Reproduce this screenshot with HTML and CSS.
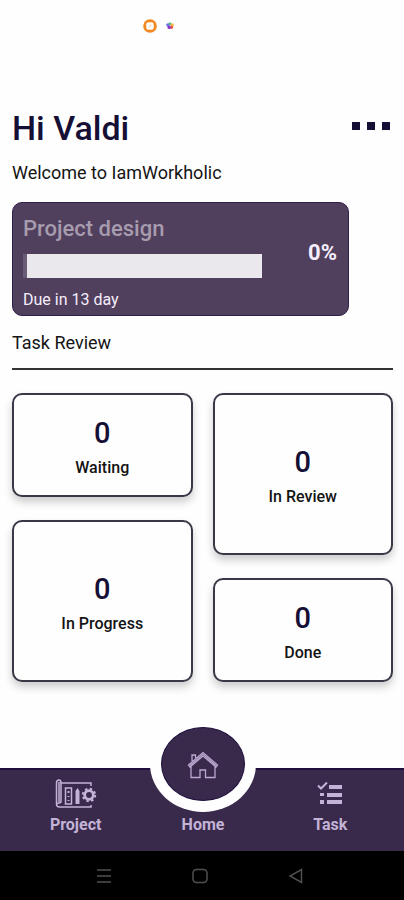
FILE: index.html
```html
<!DOCTYPE html>
<html lang="en">
<head>
<meta charset="utf-8">
<meta name="viewport" content="width=device-width, initial-scale=1">
<title>IamWorkholic</title>
<link rel="stylesheet" href="styles.css">
</head>
<body>
<div class="status">
  <svg width="14" height="14" viewBox="0 0 14 14" aria-hidden="true">
    <circle cx="7" cy="7" r="6.8" fill="#f5871f"/>
    <rect x="3.2" y="3.2" width="7.6" height="7.6" rx="2.2" fill="#fff"/>
    <path d="M6 8.500 8 5.500" stroke="#f9c79a" stroke-width="1"/>
  </svg>
  <svg width="10" height="10" viewBox="0 0 10 10" aria-hidden="true">
    <circle cx="3" cy="4" r="1.800" fill="#6c6be8"/>
    <circle cx="5" cy="2.800" r="1.500" fill="#58b98a"/>
    <circle cx="7.200" cy="4" r="1.700" fill="#f5b942"/>
    <circle cx="6.500" cy="6.300" r="1.700" fill="#ee5a50"/>
    <circle cx="4.200" cy="6.400" r="1.700" fill="#8a35c9"/>
  </svg>
</div>
<main class="content">
  <header class="top">
    <h1>Hi Valdi</h1>
    <button class="more" type="button" aria-label="More options"><span></span><span></span><span></span></button>
  </header>
  <p class="welcome">Welcome to IamWorkholic</p>
  <section class="project">
    <div class="project-info">
      <h2 id="project-name">Project design</h2>
      <progress value="0" max="100" aria-labelledby="project-name"></progress>
      <p class="due">Due in 13 day</p>
    </div>
    <strong class="percent">0%</strong>
  </section>
  <h3 class="review-title">Task Review</h3>
  <section class="board">
    <div class="column">
      <article class="card"><strong>0</strong><span>Waiting</span></article>
      <article class="card tall"><strong>0</strong><span>In Progress</span></article>
    </div>
    <div class="column">
      <article class="card tall"><strong>0</strong><span>In Review</span></article>
      <article class="card"><strong>0</strong><span>Done</span></article>
    </div>
  </section>
</main>
<nav class="tabs">
  <a href="#project">
    <svg width="42" height="30" viewBox="0 0 42 30" fill="none" stroke="#c3b3d6" stroke-width="1.5" aria-hidden="true">
      <path d="M6 4H36V7M36 26V28H4.500Q1.500 28 1.500 25V4Q1.500 1 4 1Q6 1 6 4V22Q6 24 4 24Q1.500 24 1.500 26M4 3V23"/>
      <rect x="10.500" y="9" width="6" height="16"/>
      <path d="M13.500 12V14M13.500 17V18M13.500 21V22" stroke-width="2"/>
      <path d="M20.500 25V12L22.500 9L24.500 12V25Z" fill="#c3b3d6" stroke="none"/>
      <circle cx="34" cy="16" r="4.300" stroke-width="2.800"/>
      <circle cx="34" cy="16" r="6.200" stroke-width="2" stroke-dasharray="2.435"/>
    </svg>
    <span>Project</span>
  </a>
  <a href="#home" aria-current="page">
    <span class="home-disc">
      <svg width="32" height="30" viewBox="0 0 32 30" fill="none" stroke="#bba9d0" stroke-width="1.300" aria-hidden="true">
        <path d="M1.500 16 16 3.500 30.500 16 29 18 16 7 3 18ZM5 12V6H8.500V9M4 17V28.500H13V21H18.500V28.500H28V17"/>
        <path d="M3 16.500 16 5.300 29 16.500"/>
      </svg>
    </span>
    <span>Home</span>
  </a>
  <a href="#task">
    <svg width="26" height="28" viewBox="0 0 26 28" fill="#c3b3d6" aria-hidden="true">
      <path d="M12 4H25V8H12ZM10 12H25V16H10ZM10 19H25V23H10ZM3 12H7V15H3ZM3 19H7V23H3Z"/>
      <path d="M1 4.500 4 7.500 10 1.500" fill="none" stroke="#c3b3d6" stroke-width="2"/>
    </svg>
    <span>Task</span>
  </a>
</nav>
<div class="system">
  <button type="button" aria-label="Recent apps"><svg width="16" height="16" viewBox="0 0 16 16"><path d="M1 2H15M1 8H15M1 14H15"/></svg></button>
  <button type="button" aria-label="Home screen"><svg width="16" height="16" viewBox="0 0 16 16"><rect x="1" y="1.500" width="14" height="13" rx="3.500"/></svg></button>
  <button type="button" aria-label="Back"><svg width="16" height="16" viewBox="0 0 16 16"><path d="M13.500 1.500V14.500L2 8Z"/></svg></button>
</div>
</body>
</html>
```
FILE: styles.css
```css
* { box-sizing: border-box; }

body {
  margin: 0;
  min-height: 100vh;
  display: flex;
  flex-direction: column;
  background: #fefefe;
  color: #141414;
  font-family: Roboto, sans-serif;
}

h1, h2, h3, p { margin: 0; }

button { border: 0; padding: 0; background: none; }

.status {
  display: flex;
  align-items: center;
  justify-content: center;
  gap: 8px;
  height: 52px;
  padding-right: 87px;
}

.content {
  flex: 1;
  padding: 56px 11px 48px 12px;
}

.top {
  display: flex;
  align-items: center;
  justify-content: space-between;
}

h1 {
  font-size: 34px;
  line-height: 40px;
  font-weight: 500;
  color: #160f35;
}

.more {
  display: flex;
  gap: 7px;
  padding: 8px 3px 12px;
}

.more span {
  width: 8px;
  height: 8px;
  background: #160f35;
}

.welcome {
  margin-top: 12px;
  font-size: 18px;
  line-height: 26px;
}

.project {
  display: flex;
  align-items: center;
  justify-content: space-between;
  width: 337px;
  max-width: 100%;
  margin-top: 16px;
  padding: 12px 11px 4px 10px;
  border: 1px solid #2f2048;
  border-radius: 10px;
  background: #503f5d;
  color: #f5eefb;
}

.project-info { width: 76%; }

h2 {
  font-size: 22px;
  line-height: 28px;
  font-weight: 500;
  color: #a79cae;
}

progress {
  display: block;
  appearance: none;
  width: 100%;
  height: 24px;
  margin: 11px 0;
  border: 0;
  border-left: 4px solid #6a5b77;
  background: #ebe8ed;
}

progress::-webkit-progress-bar { background: #ebe8ed; }

progress::-webkit-progress-value { background: #6a5b77; }

.due {
  font-size: 16px;
  line-height: 22px;
}

.percent {
  padding-bottom: 20px;
  font-size: 22px;
  line-height: 28px;
  font-weight: 700;
}

.review-title {
  margin-top: 14px;
  padding-bottom: 12px;
  border-bottom: 2px solid #333;
  font-size: 18px;
  line-height: 26px;
  font-weight: 400;
}

.board {
  display: grid;
  grid-template-columns: 1fr 1fr;
  gap: 20px;
  margin-top: 23px;
}

.column {
  display: flex;
  flex-direction: column;
  gap: 23px;
}

.card {
  display: flex;
  flex-direction: column;
  align-items: center;
  gap: 9px;
  padding: 22px 8px 17px;
  border: 2px solid #3a3846;
  border-radius: 10px;
  background: #fefefe;
  box-shadow: 0 5px 9px rgba(0, 0, 0, 0.2);
}

.card.tall { padding: 51px 8px 46px; }

.card strong {
  font-size: 29px;
  line-height: 32px;
  font-weight: 500;
  color: #160f35;
}

.card span {
  font-size: 16px;
  line-height: 20px;
  font-weight: 500;
}

.tabs {
  display: grid;
  grid-template-columns: 1fr 1fr 1fr;
  height: 83px;
  padding: 0 10px 0 12px;
  border-top: 2px solid #1e0f3d;
  background: #39294b;
}

.tabs a {
  position: relative;
  display: flex;
  flex-direction: column;
  align-items: center;
  justify-content: flex-end;
  gap: 6px;
  padding-bottom: 16px;
  color: #c3b3d6;
  font-size: 16px;
  line-height: 20px;
  font-weight: 700;
  text-decoration: none;
}

.home-disc {
  position: absolute;
  top: -43px;
  left: 50%;
  display: flex;
  align-items: center;
  justify-content: center;
  width: 84px;
  height: 74px;
  margin-left: -42px;
  border: 1px solid #1e0f3d;
  border-radius: 50%;
  background: #39294b;
  box-shadow: 0 0 0 11px #fefefe;
}

.system {
  display: flex;
  align-items: center;
  justify-content: center;
  gap: 80px;
  height: 49px;
  padding-right: 4px;
  background: #000;
}

.system svg {
  display: block;
  fill: none;
  stroke: #505050;
  stroke-width: 1.5;
}
```
